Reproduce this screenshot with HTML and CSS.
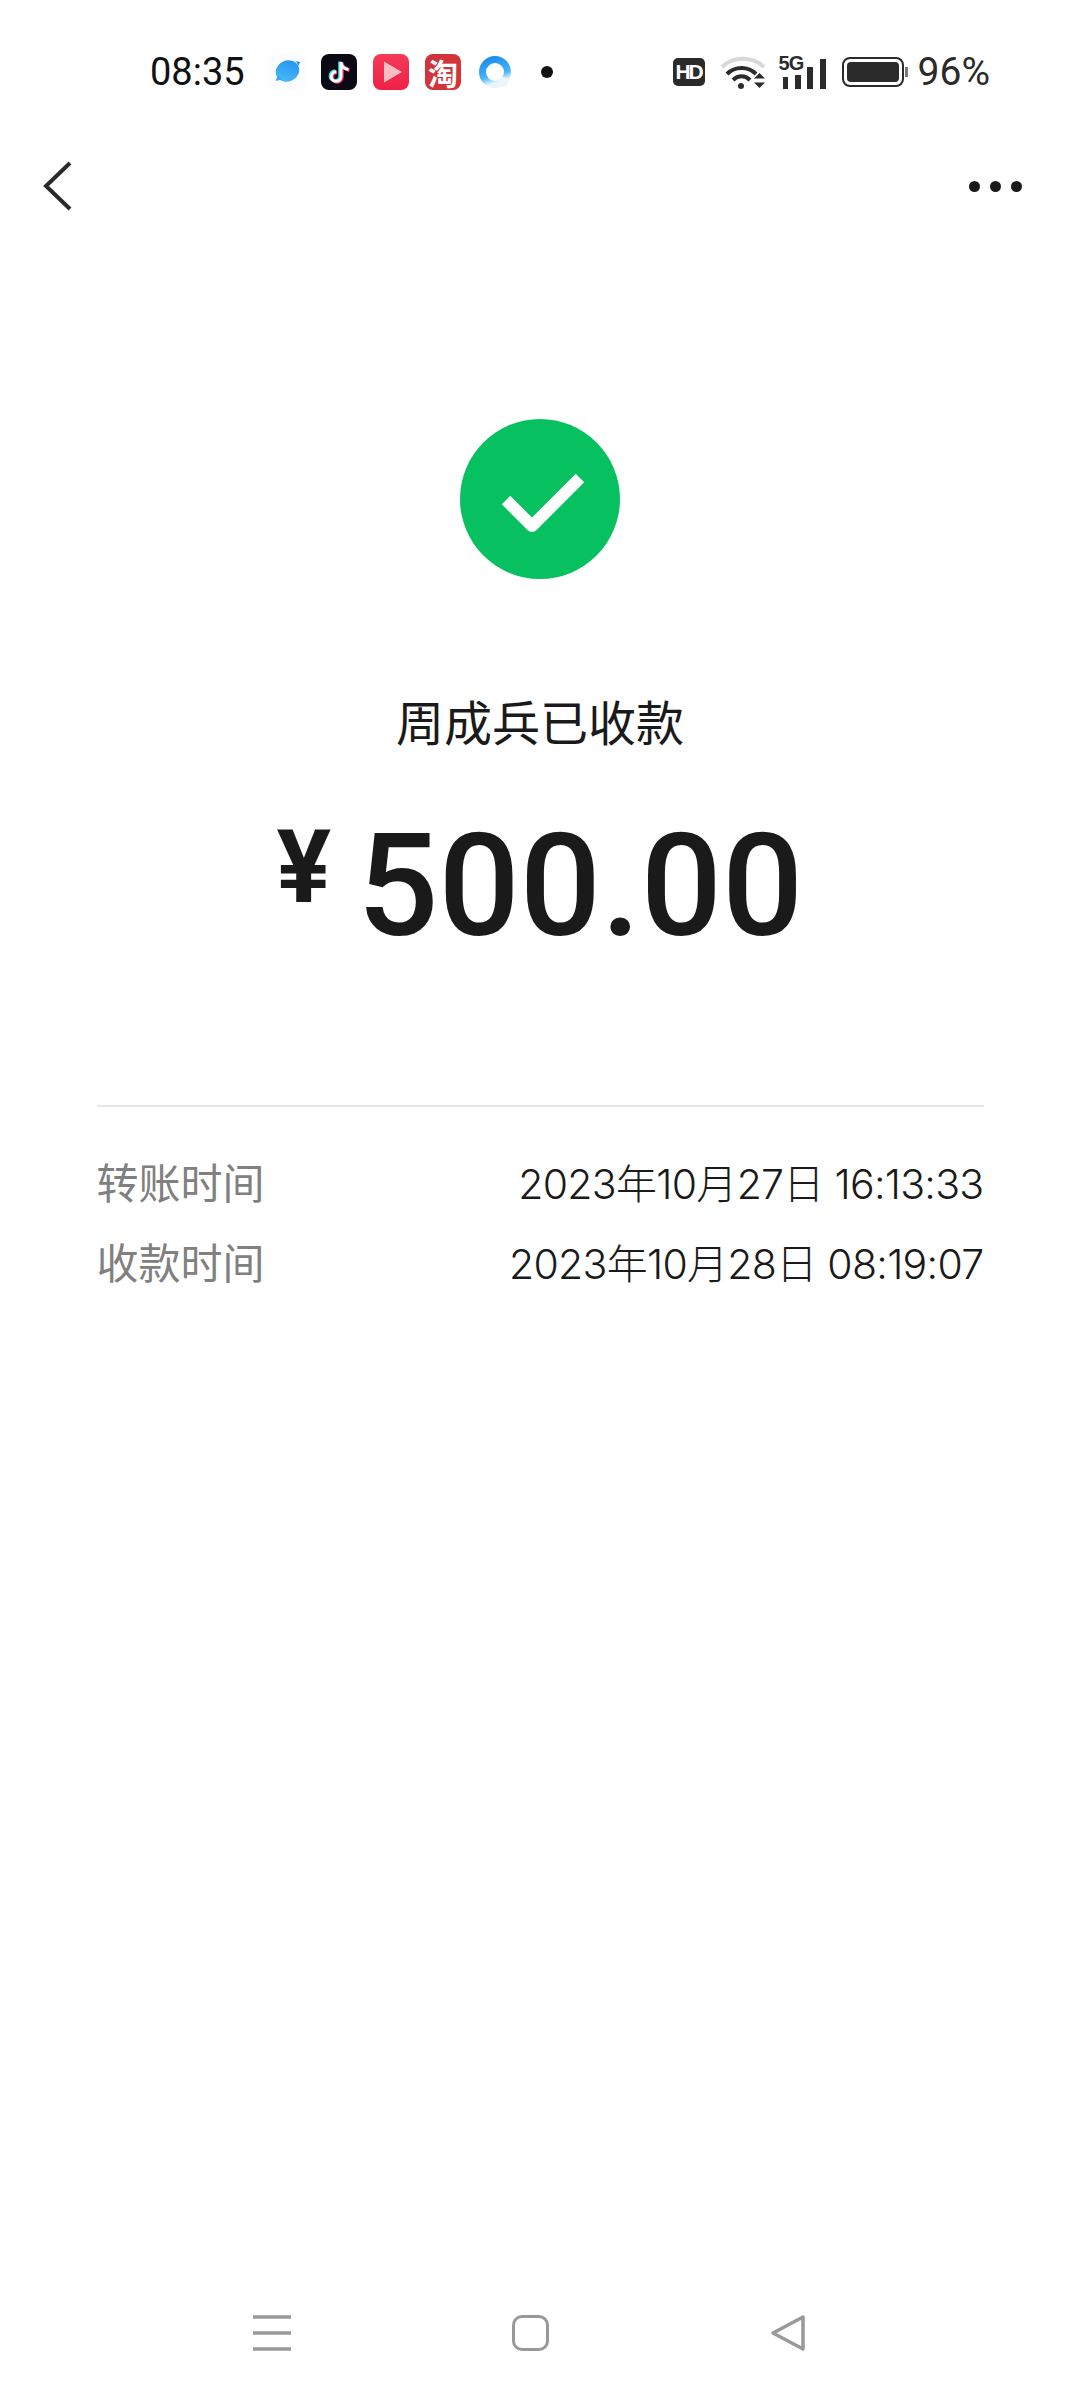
FILE: index.html
```html
<!DOCTYPE html>
<html lang="zh-CN">
<head>
    <meta charset="UTF-8">
    <meta name="viewport" content="width=device-width, initial-scale=1.0">
    <title>已收款</title>
    <link rel="stylesheet" href="styles.css">
</head>
<body>
    <div class="status-bar">
        <span class="time">08:35</span>
        <div class="app-icons">
            <svg class="app-icon" viewBox="0 0 36 36">
                <defs>
                    <linearGradient id="planet" x1="1" y1="0" x2="0" y2="1">
                        <stop offset="0" stop-color="#1f8ff0"/>
                        <stop offset="1" stop-color="#4fc0fa"/>
                    </linearGradient>
                </defs>
                <rect width="36" height="36" rx="8" fill="#fbfcfe"/>
                <ellipse cx="18.500" cy="17" rx="12" ry="10.500" fill="url(#planet)" transform="rotate(-25 18.500 17)"/>
                <path d="M6.500 27 L9 21 L13 25.500 Z" fill="#3aa6f4"/>
                <path d="M27 7 L31 8 L29.500 12 Z" fill="#1f8ff0"/>
            </svg>
            <svg class="app-icon" viewBox="0 0 36 36">
                <rect width="36" height="36" rx="8" fill="#0b0a14"/>
                <path d="M20 8 V22.500 a4.800 4.800 0 1 1 -4.800 -4.800 M20 9 c1 4 3.500 6 7.500 6.500" fill="none" stroke="#25e2e8" stroke-width="3.600" transform="translate(-1 -.6)"/>
                <path d="M20 8 V22.500 a4.800 4.800 0 1 1 -4.800 -4.800 M20 9 c1 4 3.500 6 7.500 6.500" fill="none" stroke="#f6295c" stroke-width="3.600" transform="translate(1 .6)"/>
                <path d="M20 8 V22.500 a4.800 4.800 0 1 1 -4.800 -4.800 M20 9 c1 4 3.500 6 7.500 6.500" fill="none" stroke="#fff" stroke-width="3"/>
            </svg>
            <svg class="app-icon" viewBox="0 0 36 36">
                <defs>
                    <linearGradient id="video" x1="0" y1="0" x2="0" y2="1">
                        <stop offset="0" stop-color="#f53a58"/>
                        <stop offset="1" stop-color="#ee2148"/>
                    </linearGradient>
                </defs>
                <rect width="36" height="36" rx="8" fill="url(#video)"/>
                <path d="M11 7.500 L29 18 L11 28.500 Z" fill="#fbbcc4"/>
            </svg>
            <span class="app-icon tao">淘</span>
            <svg class="app-icon" viewBox="0 0 36 36">
                <defs>
                    <linearGradient id="ring" x1="0" y1="0" x2=".3" y2="1">
                        <stop offset="0" stop-color="#1c8cf0"/>
                        <stop offset=".7" stop-color="#46b4f5"/>
                        <stop offset="1" stop-color="#e8f5fd"/>
                    </linearGradient>
                </defs>
                <circle cx="18" cy="18" r="12.500" fill="none" stroke="url(#ring)" stroke-width="7"/>
                <circle cx="26" cy="28" r="5" fill="#eef6fb"/>
            </svg>
            <span class="notif-dot"></span>
        </div>
        <div class="sys-icons">
            <span class="hd">HD</span>
            <svg class="wifi" viewBox="0 0 46 36" width="46" height="36">
                <path d="M2 13 C13 2 33 2 44 13" fill="none" stroke="#d8d8d8" stroke-width="4"/>
                <path d="M7 20 C15 12 28 12 36 20" fill="none" stroke="#2b2b2b" stroke-width="4"/>
                <path d="M13 26 C18 21 25 21 30 26" fill="none" stroke="#2b2b2b" stroke-width="4"/>
                <circle cx="21" cy="32" r="3" fill="#2b2b2b"/>
                <path d="M34 24.500 L39.500 19 L45 24.500 Z M34 28.500 L39.500 34 L45 28.500 Z" fill="#2b2b2b"/>
            </svg>
            <div class="signal">
                <span class="signal-label">5G</span>
                <i class="bar b1"></i><i class="bar b2"></i><i class="bar b3"></i><i class="bar b4"></i>
            </div>
            <div class="battery">
                <div class="battery-fill"></div>
            </div>
            <span class="battery-tip"></span>
            <span class="percent">96%</span>
        </div>
    </div>

    <div class="top-nav">
        <svg viewBox="0 0 30 52" width="30" height="52">
            <path d="M27 3 L3 26 L27 49" fill="none" stroke="#2a2a2a" stroke-width="4"/>
        </svg>
        <div class="more"><i></i><i></i><i></i></div>
    </div>

    <main class="content">
        <svg class="check" viewBox="0 0 160 160" width="160" height="160">
            <circle cx="80" cy="80" r="80" fill="#07c160"/>
            <path d="M46 81 L72 107 L120 59" fill="none" stroke="#fff" stroke-width="12" stroke-linejoin="round"/>
        </svg>
        <h1 class="title">周成兵已收款</h1>
        <div class="amount">
            <span class="yen">¥</span>
            <span class="value">500.00</span>
        </div>
        <div class="details">
            <div class="row"><span class="label">转账时间</span><span class="date">2023年10月27日 16:13:33</span></div>
            <div class="row"><span class="label">收款时间</span><span class="date">2023年10月28日 08:19:07</span></div>
        </div>
    </main>

    <div class="bottom-nav">
        <svg viewBox="0 0 38 36" width="38" height="36">
            <path d="M0 2 H38 M0 18 H38 M0 34 H38" stroke="#999" stroke-width="3.500"/>
        </svg>
        <span class="home-btn"></span>
        <svg viewBox="0 0 36 38" width="36" height="38">
            <path d="M33 3 L3 19 L33 35 Z" fill="none" stroke="#999" stroke-width="3.500" stroke-linejoin="round"/>
        </svg>
    </div>
</body>
</html>
```

FILE: styles.css
```css
* {
    box-sizing: border-box;
}

html, body {
    margin: 0;
    padding: 0;
}

body {
    width: 1080px;
    height: 2400px;
    background: #fff;
    color: #1a1a1a;
    font-family: Roboto, "Noto Sans CJK SC", sans-serif;
    display: flex;
    flex-direction: column;
    overflow: hidden;
}

.status-bar {
    height: 144px;
    padding: 0 90px 0 150px;
    display: flex;
    align-items: center;
    color: #111;
}

.time {
    font-size: 38px;
    width: 97px;
}

.app-icons {
    display: flex;
    align-items: center;
    gap: 16px;
    margin-left: 22px;
}

.app-icon {
    display: block;
    width: 36px;
    height: 36px;
}

.tao {
    background: #d1343a;
    border-radius: 8px;
    color: #fff;
    font: 700 30px/36px "Noto Sans CJK SC", sans-serif;
    text-align: center;
}

.notif-dot {
    width: 12px;
    height: 12px;
    border-radius: 50%;
    background: #111;
    margin-left: 12px;
}

.sys-icons {
    margin-left: auto;
    display: flex;
    align-items: center;
    color: #2b2b2b;
}

.hd {
    width: 32px;
    height: 28px;
    background: #2b2b2b;
    border-radius: 5px;
    color: #fff;
    font: 700 21px/28px "Liberation Sans", sans-serif;
    text-align: center;
    letter-spacing: -2px;
}

.wifi {
    margin-left: 15px;
}

.signal {
    position: relative;
    width: 47px;
    height: 34px;
    margin-left: 13px;
    display: flex;
    align-items: flex-end;
    gap: 6.500px;
    padding-left: 4px;
}

.signal-label {
    position: absolute;
    left: 0;
    top: -2px;
    font: 700 20px/20px "Liberation Sans", sans-serif;
    letter-spacing: -1px;
}

.bar {
    width: 6px;
    background: #2b2b2b;
}

.b1 { height: 12px; }
.b2 { height: 14px; }
.b3 { height: 22px; }
.b4 { height: 30px; }

.battery {
    width: 62px;
    height: 30px;
    margin-left: 16px;
    border: 2.500px solid #2b2b2b;
    border-radius: 8px;
    padding: 3px;
}

.battery-fill {
    height: 100%;
    background: #2b2b2b;
    border-radius: 4px;
}

.battery-tip {
    width: 3px;
    height: 10px;
    background: #777;
    margin-left: 1px;
}

.percent {
    font-size: 39px;
    margin-left: 10px;
}

.top-nav {
    height: 84px;
    padding: 0 58px 0 43px;
    display: flex;
    align-items: center;
    justify-content: space-between;
}

.more {
    display: flex;
    gap: 10px;
}

.more i {
    width: 11px;
    height: 11px;
    border-radius: 50%;
    background: #1a1a1a;
}

.content {
    display: flex;
    flex-direction: column;
    align-items: center;
    padding-top: 191px;
}

.check {
    display: block;
}

.title {
    margin: 111px 0 0;
    font: 400 48px/60px "Noto Sans CJK SC", sans-serif;
}

.amount {
    display: flex;
    align-items: flex-start;
    margin-top: 61px;
    height: 150px;
}

.yen {
    font-size: 102px;
    line-height: 100px;
    font-weight: 700;
    margin-top: 6px;
    margin-right: 26px;
}

.value {
    font-size: 143px;
    line-height: 150px;
    font-weight: 500;
}

.details {
    width: 887px;
    margin-top: 144px;
    padding-top: 34px;
    border-top: 2px solid #e6e6e6;
}

.row {
    height: 80px;
    display: flex;
    align-items: center;
    justify-content: space-between;
}

.label {
    font: 400 42px/1 "Noto Sans CJK SC", sans-serif;
    color: #808080;
}

.date {
    font-family: Inter, "Noto Sans CJK SC", sans-serif;
    font-size: 41px;
    font-weight: 300;
    letter-spacing: -0.700px;
}

.bottom-nav {
    margin-top: auto;
    height: 136px;
    padding: 2px 274px 0 253px;
    display: flex;
    align-items: center;
    justify-content: space-between;
}

.home-btn {
    width: 37px;
    height: 36px;
    border: 3.500px solid #999;
    border-radius: 10px;
}
```
